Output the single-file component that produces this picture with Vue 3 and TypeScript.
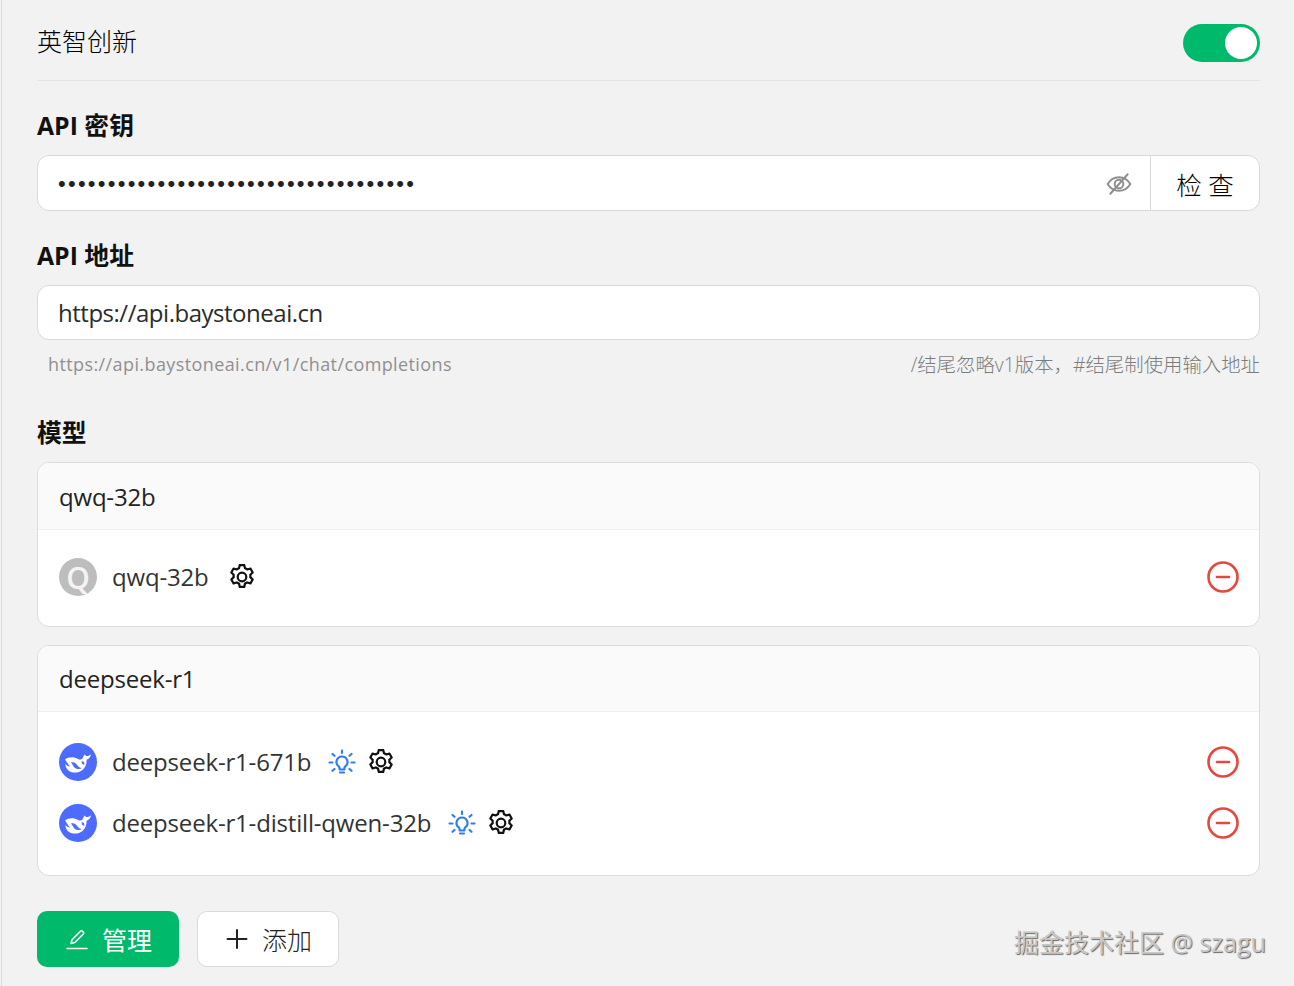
<script setup lang="ts">
interface Model { name: string; kind: 'q' | 'd'; vision: boolean }
interface Group { title: string; models: Model[] }
const groups: Group[] = [
  { title: 'qwq-32b', models: [{ name: 'qwq-32b', kind: 'q', vision: false }] },
  { title: 'deepseek-r1', models: [
    { name: 'deepseek-r1-671b', kind: 'd', vision: true },
    { name: 'deepseek-r1-distill-qwen-32b', kind: 'd', vision: true },
  ] },
]
const dots = '•'.repeat(36)
</script>

<template>
  <div class="page">
    <div class="head">
      <span class="title">英智创新</span>
      <span class="switch"><span class="knob"></span></span>
    </div>

    <div class="label first">API 密钥</div>
    <div class="field">
      <span class="value dots">{{ dots }}</span>
      <svg class="eye" width="26" height="26" viewBox="0 0 24 24" fill="none" stroke="#8f8f8f" stroke-width="1.8" stroke-linecap="round" stroke-linejoin="round">
        <path d="M1.5 12c2.6-4.2 6-6.300 10.500-6.300S19.900 7.800 22.500 12c-2.600 4.200-6 6.300-10.500 6.300S4.100 16.200 1.500 12Z" />
        <circle cx="12" cy="12" r="4" />
        <path d="M4 21 20 3" />
      </svg>
      <span class="check">检 查</span>
    </div>

    <div class="label second">API 地址</div>
    <div class="field short">
      <span class="value url">https://api.baystoneai.cn</span>
    </div>
    <div class="hints">
      <span class="hint-url">https://api.baystoneai.cn/v1/chat/completions</span>
      <span class="hint-note">/结尾忽略v1版本，#结尾制使用输入地址</span>
    </div>

    <div class="label third">模型</div>
    <div v-for="g in groups" :key="g.title" class="card">
      <div class="card-head">{{ g.title }}</div>
      <div class="card-body">
        <div v-for="m in g.models" :key="m.name" class="row">
          <span v-if="m.kind === 'q'" class="avatar grey">Q</span>
          <span v-else class="avatar blue">
            <svg width="30" height="30" viewBox="0 0 30 30">
              <path fill="#fff" d="M2 12.500C5 10 11 9.500 15 12c2 1.200 4 .5 5-1.500.6-1.500 1-2.500 2-3 .4 1.300 1.500 1.900 3 1.500 1-.2 2-1 3-1.500-.5 2.500-2 4.500-4.500 5.300.5 3.200-1 7.700-4 10.200-3.500 3-9.500 3.500-13.500 1-2.500-1.800-4-5-3.500-7 1 1.500 2.500 2.500 4.500 2.500-2-2-3.200-4.500-5-7Z" />
              <path fill="#4d6bfe" d="M8 15.500c3-1 5 .5 6.500 3 1 1.500 2.500 2.500 4.500 2.500-2.500 1.800-6 1.300-8-1-1.200-1.500-1.800-3.500-3-4.500ZM18.500 14l2.500 1 .5 3-2.500-1.200Z" />
            </svg>
          </span>
          <span class="name">{{ m.name }}</span>
          <svg v-if="m.vision" class="bulb" width="28" height="28" viewBox="0 0 28 28" fill="none" stroke="#2f7df0" stroke-width="2.200" stroke-linecap="round" stroke-linejoin="round">
            <path d="M14 2.500v2.500M4.500 6l2 1.800M23.500 6l-2 1.800M1.500 14.500h3M23.500 14.500h3M6.500 21l-2 1.800M21.500 21l2 1.800" />
            <path d="M14 8.500a5.500 5.500 0 0 0-3.300 9.900c.6.500.9 1.100.9 1.800v1.300h4.800v-1.300c0-.7.300-1.300.9-1.800A5.500 5.500 0 0 0 14 8.500Z" />
            <path d="M12 24.500h4" />
          </svg>
          <svg class="gear" width="26" height="26" viewBox="2 2 20 20" fill="none" stroke="#111" stroke-width="1.700" stroke-linecap="round" stroke-linejoin="round">
            <path d="M10.300 2.800h3.400l.6 2.500c.6.200 1.200.5 1.700.9l2.500-.7 1.700 3-1.800 1.800c.1.600.1 1.200 0 1.800l1.800 1.800-1.700 3-2.500-.7c-.5.400-1.100.7-1.700.9l-.6 2.500h-3.400l-.6-2.500c-.6-.2-1.200-.5-1.700-.9l-2.500.7-1.700-3 1.800-1.800c-.1-.6-.1-1.200 0-1.800L3.800 8.500l1.700-3 2.500.7c.5-.4 1.100-.7 1.700-.9Z" />
            <circle cx="12" cy="12" r="3.300" />
          </svg>
          <svg class="minus" width="32" height="32" viewBox="0 0 32 32" fill="none" stroke="#e5483f" stroke-width="2.600" stroke-linecap="round">
            <circle cx="16" cy="16" r="14.500" />
            <path d="M10 16h12" />
          </svg>
        </div>
      </div>
    </div>

    <div class="actions">
      <button class="btn primary">
        <svg width="26" height="26" viewBox="0 0 26 26" fill="none" stroke="#fff" stroke-width="1.600" stroke-linecap="round" stroke-linejoin="round">
          <path d="M7 17.500 8 13.700 16.500 5.200a1.400 1.400 0 0 1 2 0l.8.8a1.400 1.400 0 0 1 0 2L10.800 16.500Z" />
          <path d="M3 22.500h20" />
        </svg>
        <span>管理</span>
      </button>
      <button class="btn plain">
        <svg width="26" height="26" viewBox="0 0 26 26" fill="none" stroke="#222" stroke-width="2" stroke-linecap="round">
          <path d="M13 4v18M3.500 13h19" />
        </svg>
        <span>添加</span>
      </button>
    </div>
    <div class="mark">掘金技术社区 @ szagu</div>
  </div>
</template>

<style>
body { background: #f2f2f2; }
</style>

<style scoped>
.page {
  position: relative;
  box-sizing: border-box;
  width: 1293px;
  height: 986px;
  overflow: hidden;
  padding: 5px 34px 0 35px;
  margin-left: 1px;
  background: #f2f2f2;
  border-left: 1px solid #dcdcdc;
  color: #222;
  font-family: "Open Sans", "Noto Sans CJK SC", sans-serif;
  font-size: 25px;
}
.head {
  height: 75px;
  display: flex;
  align-items: center;
  justify-content: space-between;
  border-bottom: 1px solid #e4e4e4;
}
.title {
  font-size: 25px;
  font-weight: 300;
  color: #000;
  margin-bottom: 5px;
}
.switch {
  display: flex;
  align-items: center;
  justify-content: flex-end;
  width: 77px;
  height: 38px;
  box-sizing: border-box;
  padding-right: 3px;
  margin-top: 1px;
  border-radius: 19px;
  background: #00b96b;
}
.knob {
  width: 32px;
  height: 32px;
  border-radius: 50%;
  background: #fff;
}
.label {
  font-size: 24.800px;
  line-height: 31px;
  font-weight: 700;
  color: #111;
}
.first { margin-top: 29px; margin-bottom: 14px; }
.second { margin-top: 29px; margin-bottom: 14px; }
.third { margin-top: 39px; margin-bottom: 14px; }
.field {
  box-sizing: border-box;
  display: flex;
  align-items: center;
  height: 56px;
  background: #fff;
  border: 1px solid #d9d9d9;
  border-radius: 12px;
  padding-left: 20px;
}
.field.short { height: 55px; }
.value {
  flex: 1;
  font-size: 24px;
  line-height: 32px;
  color: #2b2b2b;
}
.url { letter-spacing: -0.480px; }
.dots {
  font-family: "Liberation Sans", sans-serif;
  font-size: 22px;
  letter-spacing: 2.250px;
  padding-top: 2px;
  color: #222;
}
.eye { margin-right: 18px; margin-top: 1px; }
.check {
  align-self: stretch;
  display: flex;
  align-items: center;
  justify-content: center;
  width: 108px;
  border-left: 1px solid #d9d9d9;
  font-size: 25.500px;
  font-weight: 300;
  color: #000;
}
.hints {
  display: flex;
  justify-content: space-between;
  align-items: center;
  height: 28px;
  margin-top: 10px;
  padding-left: 11px;
  font-size: 18px;
  color: #9a9a9a;
}
.hint-url { letter-spacing: 0.400px; color: #909090; }
.hint-note { font-size: 19.400px; font-weight: 300; color: #7c7c7c; margin-bottom: 2px; }
.card {
  box-sizing: border-box;
  background: #fff;
  border: 1px solid #dcdcdc;
  border-radius: 12px;
  margin-bottom: 18px;
  overflow: hidden;
}
.card-head {
  height: 67px;
  box-sizing: border-box;
  padding-left: 21px;
  display: flex;
  align-items: center;
  background: #fafafa;
  border-bottom: 1px solid #efefef;
  font-size: 24px;
  letter-spacing: -0.200px;
}
.card + .card .card-head { height: 66px; }
.card-body {
  padding: 28px 20px 30px 21px;
  display: flex;
  flex-direction: column;
  gap: 23px;
}
.card + .card .card-body { padding-top: 31px; padding-bottom: 33px; }
.row {
  display: flex;
  align-items: center;
  height: 38px;
}
.avatar {
  width: 38px;
  height: 38px;
  border-radius: 50%;
  display: flex;
  align-items: center;
  justify-content: center;
  flex: none;
}
.grey {
  background: #bdbdbd;
  color: #f4f4f4;
  font-size: 30px;
  font-weight: 600;
}
.blue { background: #4d6bfe; }
.name {
  margin-left: 15px;
  margin-bottom: 2px;
  font-size: 24px;
  letter-spacing: -0.180px;
  color: #333;
}
.bulb { margin-left: 17px; }
.gear { margin-left: 20px; }
.bulb + .gear { margin-left: 12px; }
.minus { margin-left: auto; }
.actions {
  display: flex;
  gap: 18px;
  margin-top: 35px;
}
.btn {
  box-sizing: border-box;
  width: 142px;
  height: 56px;
  display: flex;
  align-items: center;
  justify-content: center;
  gap: 12px;
  border-radius: 10px;
  font-family: inherit;
  font-size: 25px;
  font-weight: 300;
  padding: 0;
}
.primary {
  background: #00b96b;
  border: none;
  color: #fff;
  font-weight: 400;
}
.plain {
  background: #fff;
  border: 1px solid #d9d9d9;
  color: #222;
}
.mark {
  position: absolute;
  left: 1012px;
  top: 924px;
  font-size: 25px;
  line-height: 36px;
  color: #c8c8c8;
  text-shadow: 1px 1px 1px #666;
  white-space: nowrap;
}
</style>
